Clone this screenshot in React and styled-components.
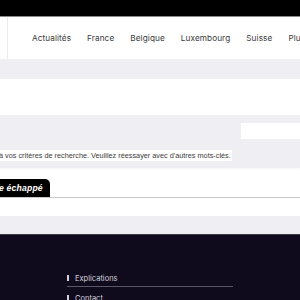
import React from "react";
import styled, { createGlobalStyle } from "styled-components";

const Global = createGlobalStyle`
  html, body { margin: 0; padding: 0; background: #fff; }
  body { width: 300px; height: 300px; overflow: hidden; font-family: "Open Sans", sans-serif; }
`;

const Page = styled.div`
  width: 300px;
  height: 300px;
  overflow: hidden;
  display: flex;
  flex-direction: column;
`;

const TopBar = styled.div`
  height: 16px;
  background: #000;
  border-bottom: 1px solid #8a8a8a;
  flex: none;
`;

const Header = styled.header`
  height: 42px;
  display: flex;
  align-items: center;
  flex: none;
  overflow: hidden;
`;

const Divider = styled.div`
  width: 7px;
  align-self: stretch;
  border-right: 1px solid #ececec;
  flex: none;
`;

const Nav = styled.nav`
  display: flex;
  gap: 16px;
  margin-left: 24px;
  white-space: nowrap;
`;

const NavItem = styled.a`
  font-family: "Inter", "Open Sans", sans-serif;
  font-size: 8.2px;
  color: #3a3a3a;
  letter-spacing: 0.1px;
  text-decoration: none;
`;

const Band = styled.div`
  background: #eeeef3;
  height: ${(p) => p.$h}px;
  flex: none;
`;

const WhiteGap = styled.div`
  height: ${(p) => p.$h}px;
  flex: none;
  background: #fff;
`;

const SearchBand = styled.div`
  background: #eeeef3;
  height: 53px;
  flex: none;
  display: flex;
  flex-direction: column;
  padding-top: 8px;
  box-sizing: border-box;
  box-shadow: 0 1px 2px rgba(0, 0, 0, 0.04);
`;

const InputRow = styled.div`
  display: flex;
  justify-content: flex-end;
`;

const Input = styled.div`
  width: 60px;
  height: 16px;
  background: #fff;
  margin-left: 241px;
`;

const Notice = styled.div`
  margin-top: 11px;
  width: 232px;
  height: 11px;
  background: #fff;
  overflow: hidden;
  white-space: nowrap;
  font-family: "Liberation Sans", Arial, sans-serif;
  font-size: 7.3px;
  line-height: 11px;
  color: #3c3c3c;
`;

const NoticeText = styled.span`
  display: inline-block;
  margin-left: -1px;
`;

const TabArea = styled.div`
  height: 30px;
  flex: none;
  display: flex;
  align-items: flex-end;
  border-bottom: 1px solid #c8c8cc;
  padding-top: 11px;
  box-sizing: border-box;
`;

const Tab = styled.div`
  width: 50px;
  height: 18px;
  background: #000;
  border-top-right-radius: 5px;
  color: #fff;
  font-family: "Liberation Sans", Arial, sans-serif;
  font-weight: bold;
  font-style: italic;
  font-size: 8.6px;
  line-height: 18px;
  overflow: hidden;
  white-space: nowrap;
  letter-spacing: 0.2px;
`;

const TabText = styled.span`
  display: inline-block;
  margin-left: -1px;
`;

const Footer = styled.footer`
  flex: 1;
  background: #0f0b1c;
  border-top: 1px solid #3a3a44;
  display: flex;
  flex-direction: column;
  padding: 38px 0 0 67px;
`;

const FooterLink = styled.div`
  display: flex;
  align-items: center;
  gap: 6px;
  width: 166px;
  height: 10px;
  font-family: "Inter", "Open Sans", sans-serif;
  font-size: 7.5px;
  color: #d4d2dc;
`;

const Marker = styled.span`
  width: 2px;
  height: 6px;
  background: #d4d2dc;
  flex: none;
`;

const FooterRule = styled.div`
  width: 166px;
  height: 1px;
  background: #5a5668;
  margin: 3px 0 6px;
`;

export default function App() {
  return (
    <Page>
      <Global />
      <TopBar />
      <Header>
        <Divider />
        <Nav>
          <NavItem>Actualités</NavItem>
          <NavItem>France</NavItem>
          <NavItem>Belgique</NavItem>
          <NavItem>Luxembourg</NavItem>
          <NavItem>Suisse</NavItem>
          <NavItem>Plus</NavItem>
        </Nav>
      </Header>
      <Band $h={20} />
      <WhiteGap $h={36} />
      <SearchBand>
        <InputRow>
          <Input />
        </InputRow>
        <Notice>
          <NoticeText>à vos critères de recherche. Veuillez réessayer avec d'autres mots-clés.</NoticeText>
        </Notice>
      </SearchBand>
      <TabArea>
        <Tab>
          <TabText>e échappé</TabText>
        </Tab>
      </TabArea>
      <WhiteGap $h={18} />
      <Band $h={18} />
      <Footer>
        <FooterLink>
          <Marker />
          Explications
        </FooterLink>
        <FooterRule />
        <FooterLink>
          <Marker />
          Contact
        </FooterLink>
      </Footer>
    </Page>
  );
}
